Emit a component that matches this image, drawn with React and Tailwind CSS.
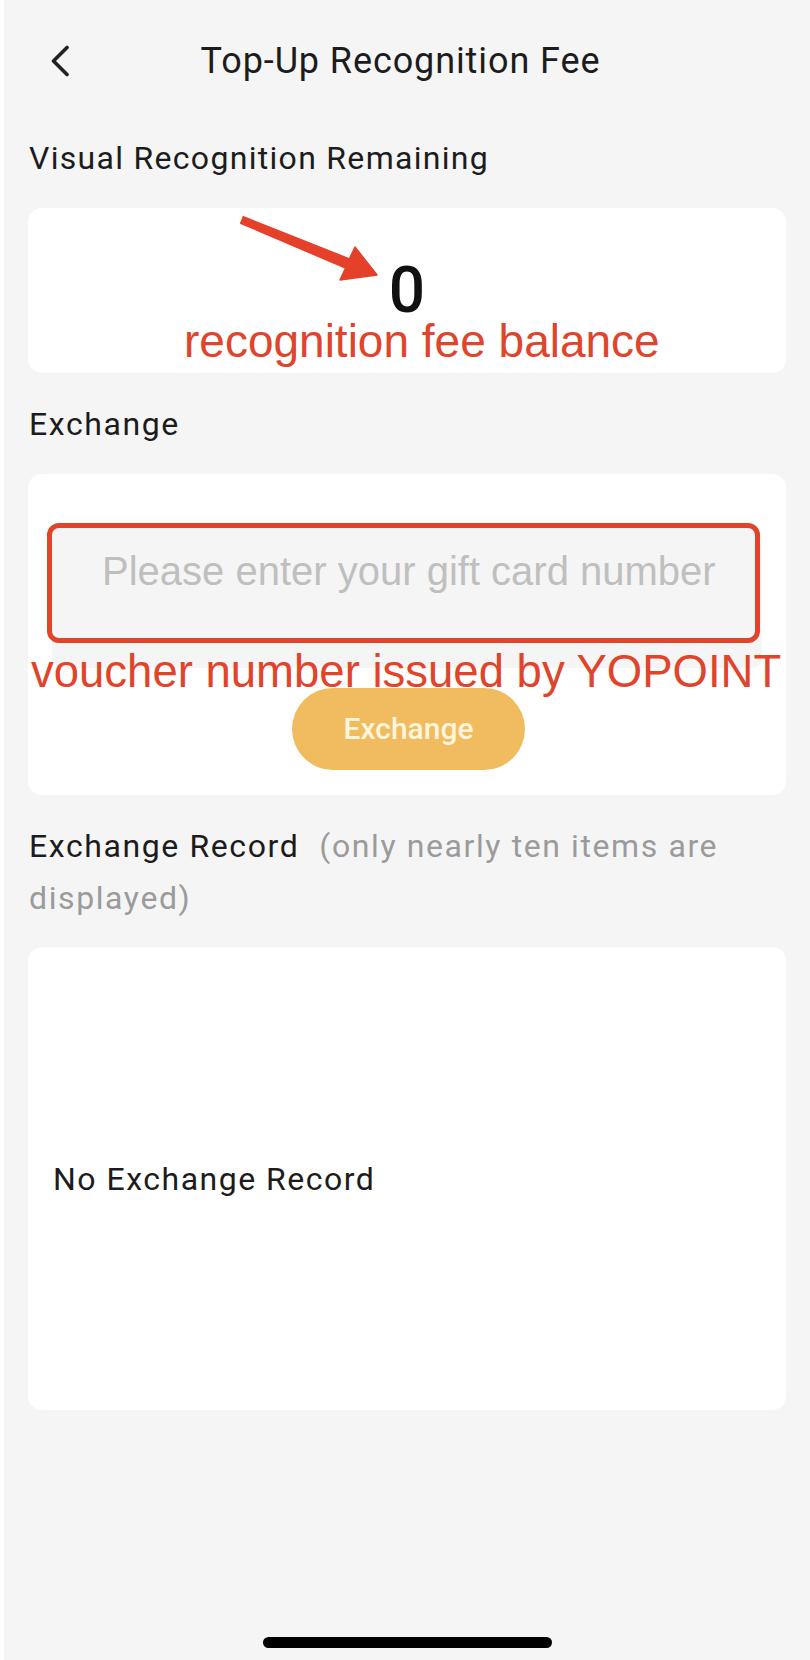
export default function App() {
  return (
    <div className="w-[810px] h-[1660px] overflow-hidden bg-[#f5f5f5] border-l-4 border-white font-['Roboto',sans-serif] text-[#1c1c1c]">
      {/* Header */}
      <div className="h-[122px] grid grid-cols-[1fr_auto_1fr] items-center">
        <div className="pl-[46px]">
          <svg width="20" height="32" viewBox="0 0 20 32" fill="none">
            <path d="M17 2.5 L3.5 16 L17 29.5" stroke="#222" strokeWidth="3.6" strokeLinecap="round" strokeLinejoin="round" />
          </svg>
        </div>
        <div className="text-[36px] leading-[40px] tracking-[0.9px] mr-[13px]">Top-Up Recognition Fee</div>
        <div />
      </div>

      {/* Visual Recognition Remaining */}
      <div className="mt-[20px] pl-[25px] text-[32px] leading-[32px] tracking-[1.3px]">Visual Recognition Remaining</div>
      <div className="relative mx-[24px] mt-[34px] h-[165px] bg-white rounded-[14px] flex items-center justify-center">
        <span className="text-[64px] leading-none font-medium text-[#111]">0</span>
        <svg className="absolute left-0 top-0" width="758" height="165" viewBox="0 0 758 165">
          <polygon
            points="215.3,8.8 321.4,50.9 327,39 349,67 312,72 317.6,60.1 212.7,15.2"
            fill="#e5412a"
            strokeLinejoin="round"
            stroke="#e5412a"
            strokeWidth="1.5"
          />
        </svg>
        <div className="absolute left-[156px] top-[110px] text-[46px] leading-[46px] text-[#e0442b] font-['Liberation_Sans',Arial,sans-serif] whitespace-nowrap">
          recognition fee balance
        </div>
      </div>

      {/* Exchange */}
      <div className="mt-[35px] pl-[25px] text-[32px] leading-[32px] tracking-[1.6px]">Exchange</div>
      <div className="relative mx-[24px] mt-[34px] bg-white rounded-[14px] pt-[53px] pb-[25px] px-[24px] flex flex-col items-center">
        <div className="w-full h-[141px] bg-[#f5f5f5] rounded-[10px] pt-[24px] pl-[50px] text-[40px] leading-[40px] text-[#bfbfbf] font-['Liberation_Sans',Arial,sans-serif] whitespace-nowrap">
          Please enter your gift card number
        </div>
        <button className="mt-[20px] ml-[3px] w-[233px] h-[82px] rounded-full bg-[#f1bc5f] text-[#fff5dc] text-[30px] font-medium leading-none">
          Exchange
        </button>
        <div className="absolute left-[19px] top-[49px] w-[713px] h-[120px] border-[5px] border-[#e0442b] rounded-[12px]" />
        <div className="absolute left-[3px] top-[175px] text-[45.5px] leading-[46px] text-[#e0442b] font-['Liberation_Sans',Arial,sans-serif] whitespace-nowrap">
          voucher number issued by YOPOINT
        </div>
      </div>

      {/* Exchange Record */}
      <div className="mt-[25px] pl-[25px] pr-[20px] text-[32px] leading-[52px] tracking-[1.6px]">
        Exchange Record
        <span className="ml-[20px] text-[#9b9b9b]">(only nearly ten items are displayed)</span>
      </div>
      <div className="mx-[24px] mt-[23px] h-[463px] bg-white rounded-[14px] flex items-center pl-[25px] text-[32px] leading-[32px] tracking-[1.5px]">
        No Exchange Record
      </div>

      {/* Home indicator */}
      <div className="mt-[227px] ml-[259px] w-[289px] h-[11px] rounded-full bg-black" />
    </div>
  );
}
